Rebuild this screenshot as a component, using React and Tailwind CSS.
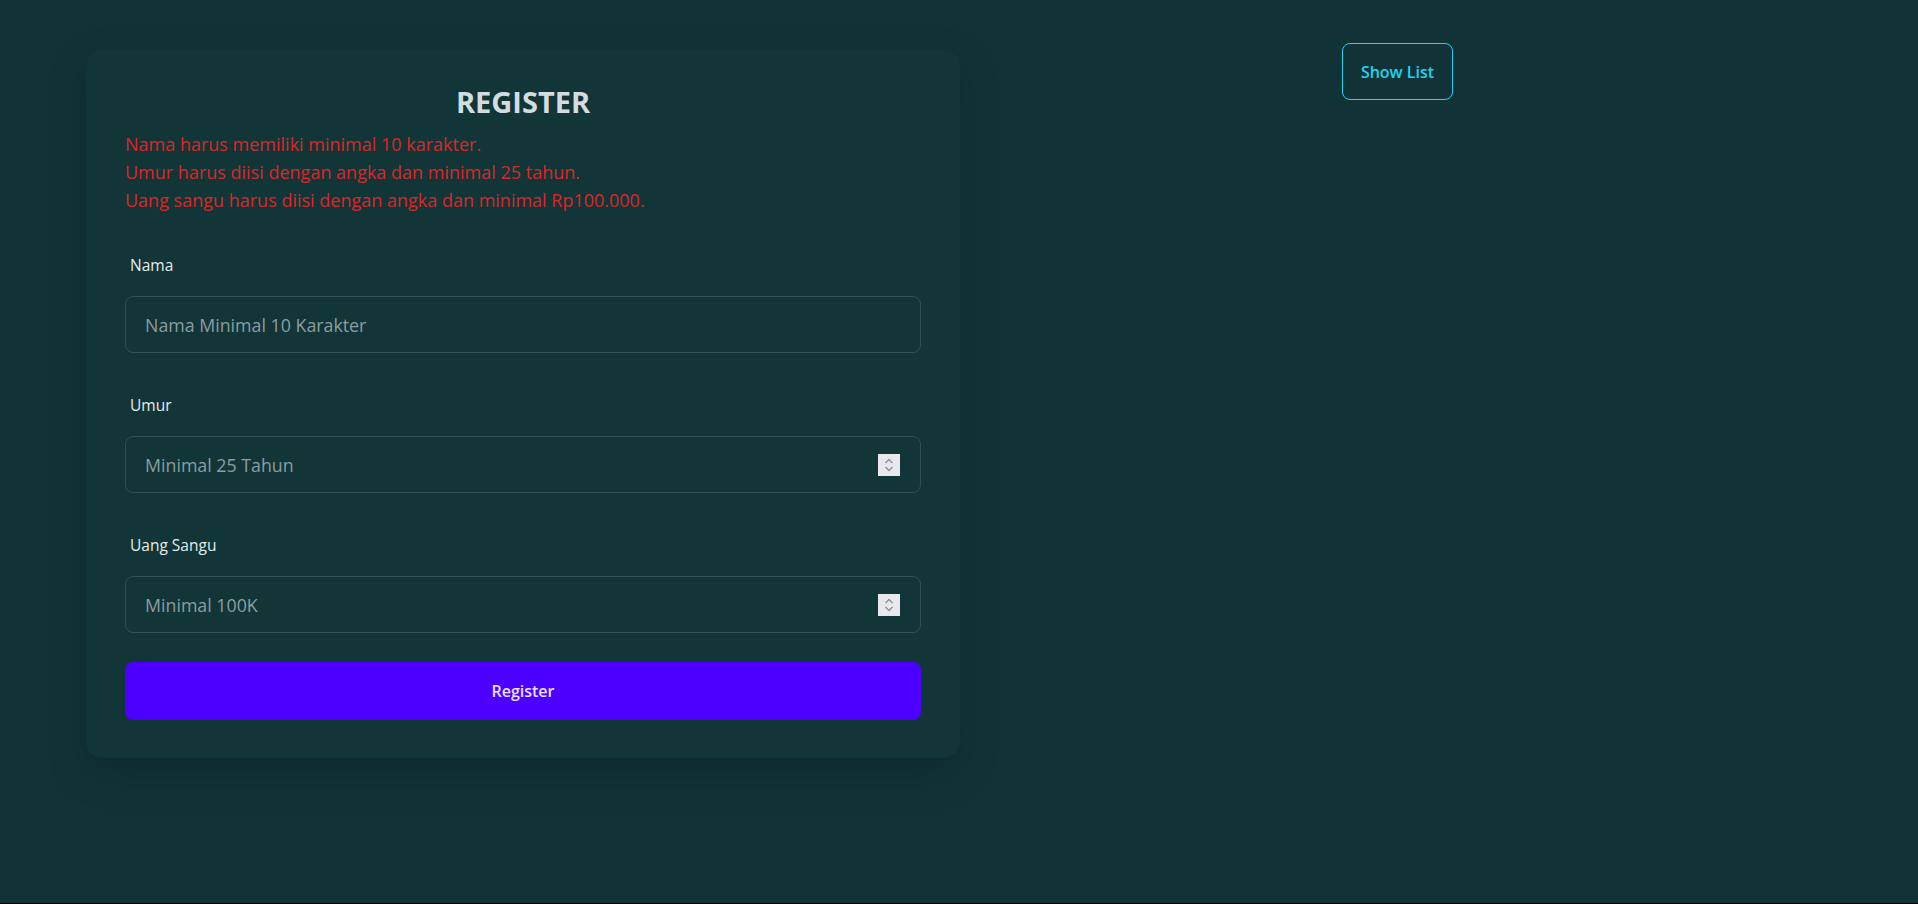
import { useState } from "react";

const font = { fontFamily: '"Open Sans", "Noto Sans", sans-serif' };

function Spinner() {
  return (
    <div className="absolute right-[21px] top-1/2 -translate-y-1/2 w-[22px] h-[22px] bg-[#e9e9ed] flex items-center justify-center">
      <svg width="12" height="16" viewBox="0 0 12 16" fill="none" stroke="#8e8e9c" strokeWidth="1.4">
        <path d="M2.5 6 L6 2.5 L9.5 6" />
        <path d="M2.5 10 L6 13.5 L9.5 10" />
      </svg>
    </div>
  );
}

function Field({ label, placeholder, number, value, onChange }) {
  return (
    <div className="flex flex-col">
      <label className="ml-[5px] text-[15.5px] leading-6 text-[#e4ecee]">{label}</label>
      <div className="relative mt-[19px]">
        <input
          type="text"
          value={value}
          onChange={onChange}
          placeholder={placeholder}
          className="w-full h-[57px] rounded-lg border border-[#2f5155] bg-transparent px-[19px] text-[17.8px] text-[#e4ecee] placeholder:text-[#8b9da0] outline-none"
          style={font}
        />
        {number && <Spinner />}
      </div>
    </div>
  );
}

export default function App() {
  const [form, setForm] = useState({ nama: "", umur: "", uang: "" });

  const errors = [
    "Nama harus memiliki minimal 10 karakter.",
    "Umur harus diisi dengan angka dan minimal 25 tahun.",
    "Uang sangu harus diisi dengan angka dan minimal Rp100.000.",
  ];

  return (
    <div className="bg-black h-[904px]" style={font}>
      <div className="h-[903px] bg-[#113337] flex items-start pt-[43px] pl-[86px]">
        {/* Register card */}
        <div className="w-[874px] mt-[7px] rounded-2xl bg-[#123538] shadow-[0_14px_40px_rgba(0,0,0,0.18)] px-[39px] pt-[34px] pb-[38px]">
          <h1 className="text-center text-[29px] leading-9 font-bold text-[#d3dde0]">REGISTER</h1>
          <div className="mt-[10px]">
            {errors.map((e) => (
              <p key={e} className="text-[18px] leading-7 text-[#dc2626]">
                {e}
              </p>
            ))}
          </div>

          <div className="mt-[39px] flex flex-col gap-[40px]">
            <Field
              label="Nama"
              placeholder="Nama Minimal 10 Karakter"
              value={form.nama}
              onChange={(e) => setForm({ ...form, nama: e.target.value })}
            />
            <Field
              label="Umur"
              placeholder="Minimal 25 Tahun"
              number
              value={form.umur}
              onChange={(e) => setForm({ ...form, umur: e.target.value })}
            />
            <Field
              label="Uang Sangu"
              placeholder="Minimal 100K"
              number
              value={form.uang}
              onChange={(e) => setForm({ ...form, uang: e.target.value })}
            />
          </div>

          <button className="mt-[29px] w-full h-[58px] rounded-lg bg-[#4c00ff] text-[16px] font-semibold text-[#e8e0ff]">
            Register
          </button>
        </div>

        {/* Show list */}
        <button className="ml-[382px] w-[111px] h-[57px] rounded-lg border border-[#22d3ee] text-[16px] font-semibold text-[#22d3ee]">
          Show List
        </button>
      </div>
    </div>
  );
}
